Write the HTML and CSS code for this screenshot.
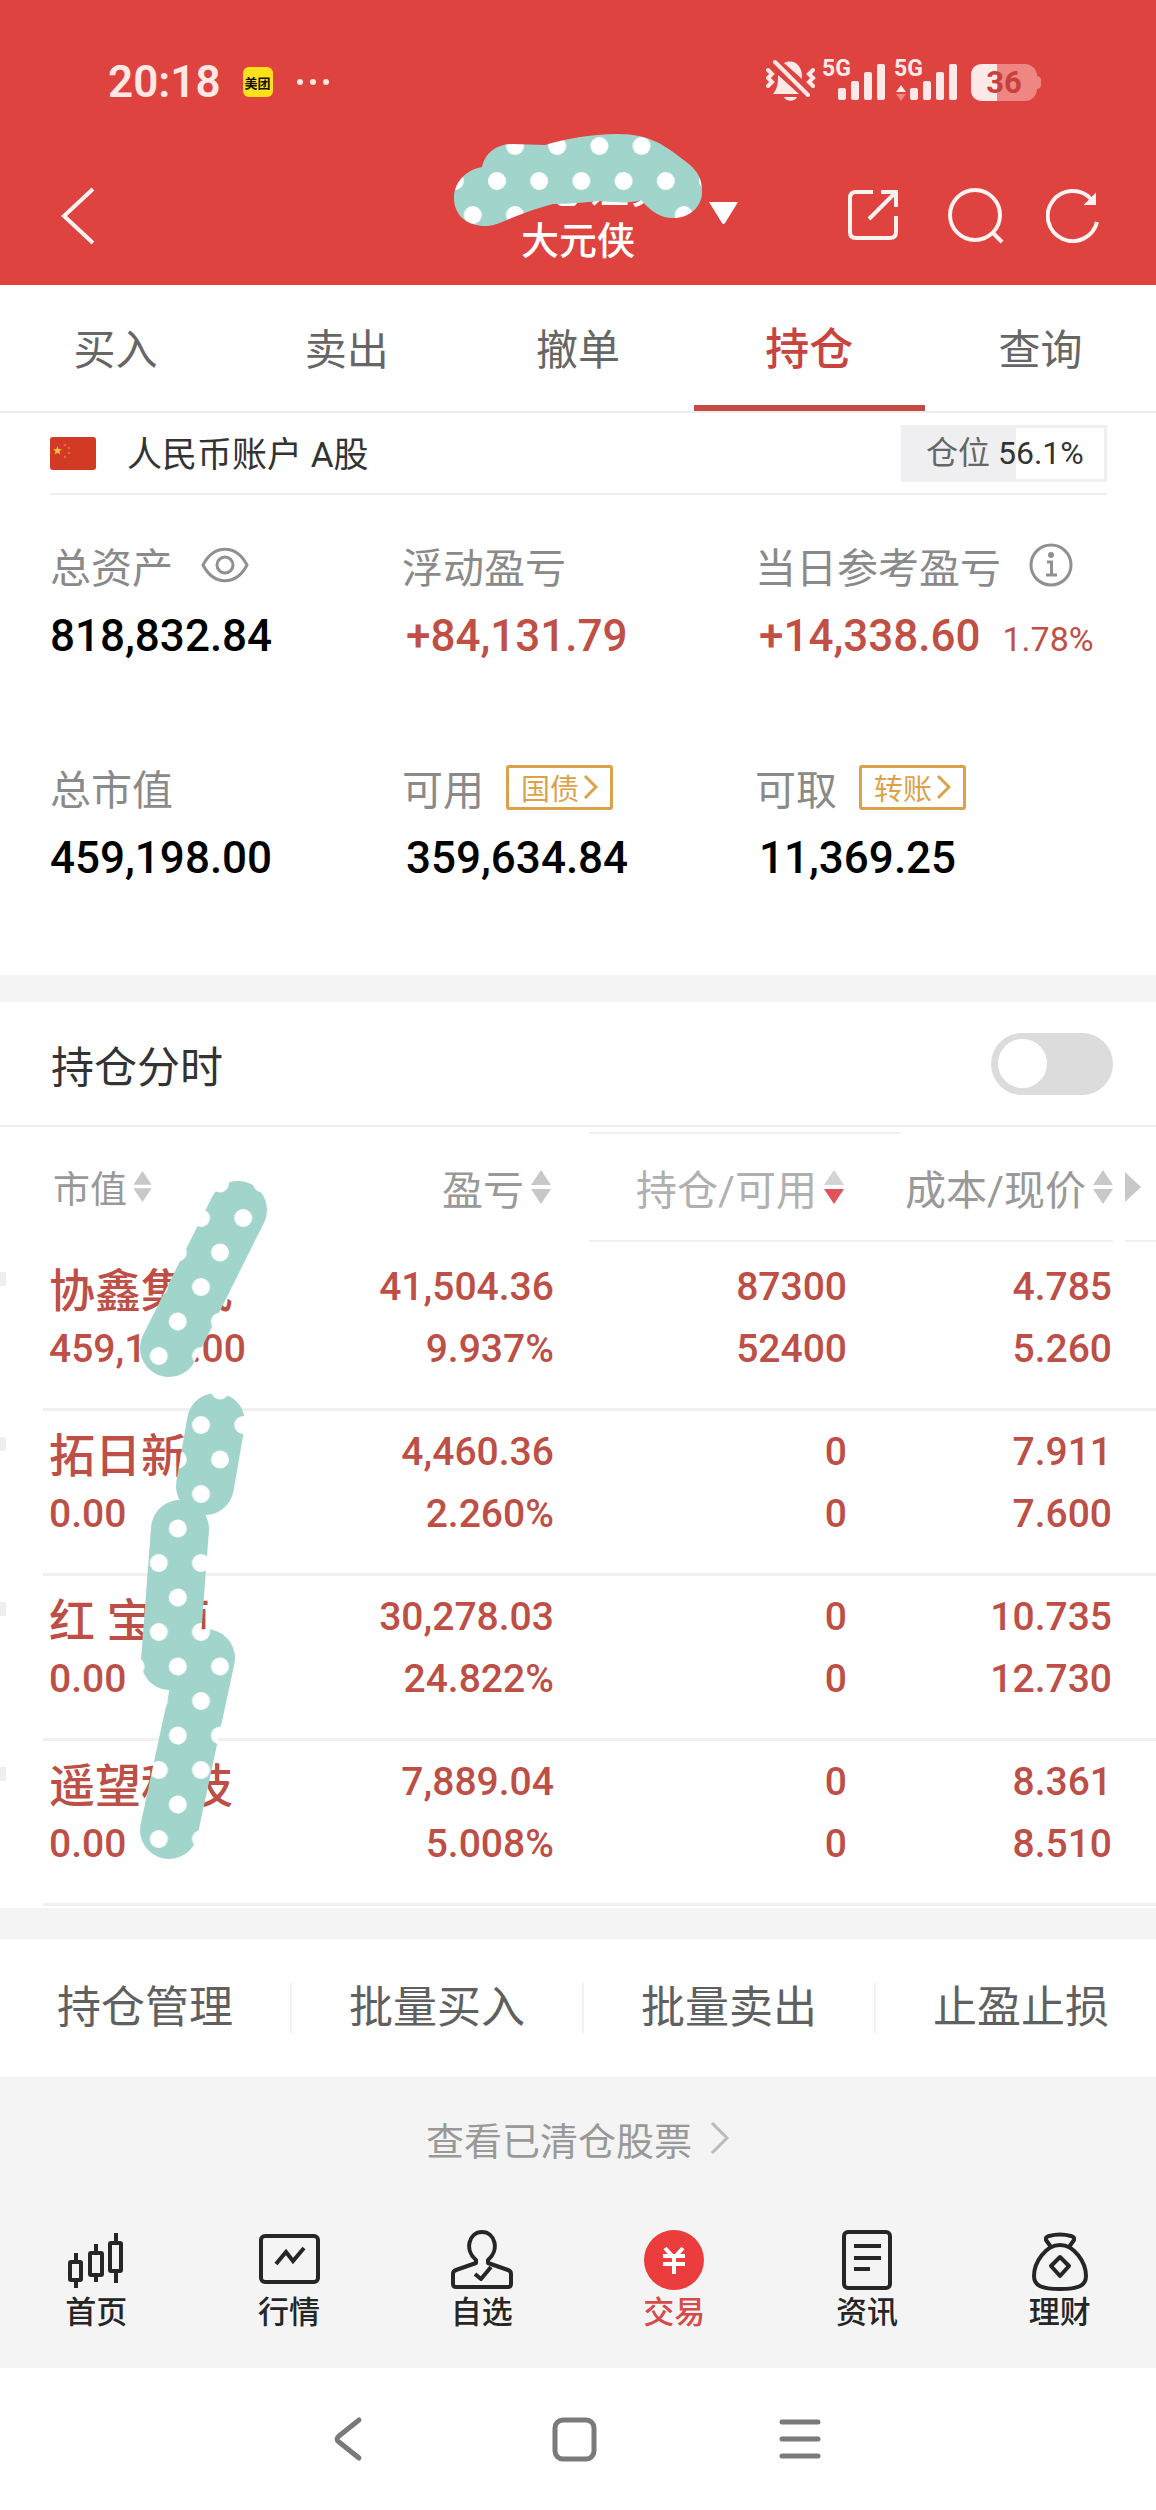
FILE: index.html
```html
<!DOCTYPE html>
<html lang="zh-CN">
<head>
<meta charset="utf-8">
<meta name="viewport" content="width=device-width, initial-scale=1">
<title>持仓</title>
<link rel="stylesheet" href="styles.css">
</head>
<body>
<div class="page">
  <header class="header">
    <div class="status">
      <span class="clock">20:18</span>
      <span class="app-badge">美团</span>
      <svg class="more" width="34" height="8" viewBox="0 0 34 8" fill="#fde8e6"><circle cx="4" cy="4" r="3"/><circle cx="17" cy="4" r="3"/><circle cx="30" cy="4" r="3"/></svg>
      <svg class="status-icons" width="276" height="68" viewBox="766 47 276 68" fill="#ffe9e8">
        <path d="M784 62c11-5 19 4 18 16z"/>
        <path d="M778 74l21 19h-26c5-6 5-12 5-19z"/>
        <path d="M784 96h13c-2 5-11 5-13 0z"/>
        <path d="M775 61l33 33M768 69l4 4-4 4 4 4-4 4M813 69l-4 4 4 4-4 4 4 4" fill="none" stroke="#ffe9e8" stroke-width="4" stroke-linecap="round"/>
        <text x="822" y="75" class="net">5G</text>
        <rect x="838" y="87" width="8" height="12" rx="2"/><rect x="851" y="80" width="8" height="19" rx="2"/><rect x="864" y="71" width="8" height="28" rx="2"/><rect x="877" y="63" width="8" height="36" rx="2"/>
        <text x="894" y="75" class="net">5G</text>
        <path d="M896 91l5-7 5 7z"/><path d="M896 93l5 7 5-7z" fill="#ee8683"/>
        <rect x="910" y="87" width="8" height="12" rx="2"/><rect x="923" y="80" width="8" height="19" rx="2"/><rect x="936" y="71" width="8" height="28" rx="2"/><rect x="949" y="63" width="8" height="36" rx="2"/>
        <rect x="971" y="63" width="66" height="37" rx="12" fill="#ee8683"/><path d="M1036 75q5 0 5 4v5q0 4-5 4z" fill="#ee8683"/>
        <path d="M997 63h-14q-12 0-12 12v13q0 12 12 12h14z"/>
        <text x="1004" y="92" class="battery" text-anchor="middle">36</text>
      </svg>
    </div>
    <div class="nav">
      <button class="icon-btn back" aria-label="返回"><svg width="36" height="60" viewBox="0 0 36 60" fill="none" stroke="#fff3f2" stroke-width="4"><path d="M33 3L4 30l29 27"/></svg></button>
      <div class="titles">
        <h1 class="broker">国心证券</h1>
        <p class="account-name">大元侠</p>
      </div>
      <div class="tools">
        <button class="icon-btn" aria-label="切换账户"><svg width="31" height="28" viewBox="0 0 31 28" fill="#fff"><path d="M1 1h29L17 22q-2 2-3 0z"/></svg></button>
        <button class="icon-btn share" aria-label="分享"><svg width="52" height="52" viewBox="0 0 52 52" fill="none" stroke="#fff3f2" stroke-width="4"><path d="M26 3H9q-6 0-6 6v34q0 6 6 6h34q6 0 6-6V27"/><path d="M34 3h15v15M48 4L22 30"/></svg></button>
        <button class="icon-btn search" aria-label="搜索"><svg width="58" height="58" viewBox="0 0 58 58" fill="none" stroke="#fff3f2" stroke-width="4"><circle cx="29" cy="29" r="25"/><path d="M46 46l10 10"/></svg></button>
        <button class="icon-btn" aria-label="刷新"><svg width="54" height="56" viewBox="0 0 54 56" fill="none" stroke="#fff3f2" stroke-width="4"><path d="M51 35A25 25 0 1 1 45 12"/><path d="M49 8v9h-9z" fill="#fff3f2" stroke-width="2"/></svg></button>
      </div>
    </div>
    <svg class="mask-title" width="252" height="96" viewBox="452 132 252 96" aria-hidden="true">
      <defs><pattern id="dots-a" patternUnits="userSpaceOnUse" x="494" y="129" width="42.2" height="69"><rect width="42.2" height="69" fill="#a1d5cc"/><g fill="#fff"><circle cx="21" cy="17" r="9"/><circle cx="3" cy="52" r="9"/><circle cx="45.2" cy="52" r="9"/></g></pattern></defs>
      <path fill="url(#dots-a)" d="M482 167C485 152 498 144 512 144L545 145C565 139 590 134 618 134C650 134 665 145 690 165C699 173 702 180 702 192C702 208 688 218 674 218C660 218 652 212 641 200C630 204 615 202 600 201C585 202 570 204 553 204C530 210 512 218 497 224C480 230 454 223 454 198C454 182 466 170 482 167Z"/>
    </svg>
  </header>

  <nav class="tabs">
    <a href="#" class="tab">买入</a><a href="#" class="tab">卖出</a><a href="#" class="tab">撤单</a><a href="#" class="tab active">持仓</a><a href="#" class="tab">查询</a>
  </nav>

  <main>
    <section class="account">
      <svg width="46" height="33" viewBox="0 0 46 33"><rect width="46" height="33" rx="3" fill="#d23a26"/><path d="M7.500 9l1.200 3.200 3.300.1-2.600 2 .9 3.300-2.800-1.900-2.800 1.900.9-3.300-2.600-2 3.300-.1z" fill="#f9c63a"/><g fill="#e0702f"><circle cx="15" cy="8" r="1.300"/><circle cx="19" cy="11" r="1.300"/><circle cx="19" cy="16" r="1.300"/><circle cx="15" cy="20" r="1.300"/></g></svg>
      <span class="account-type">人民币账户 A股</span>
      <span class="position"><span class="position-fill" style="width:56.1%"></span><span class="position-text">仓位 <b>56.1%</b></span></span>
    </section>

    <dl class="stats">
      <div class="stat">
        <dt>总资产 <button class="icon-btn eye" aria-label="隐藏金额"><svg width="48" height="36" viewBox="0 0 48 36" fill="none" stroke="#909090" stroke-width="3"><path d="M2 18C13-3 35-3 46 18C35 39 13 39 2 18Z"/><circle cx="24" cy="18" r="8"/></svg></button></dt>
        <dd>818,832.84</dd>
      </div>
      <div class="stat"><dt>浮动盈亏</dt><dd class="up">+84,131.79</dd></div>
      <div class="stat">
        <dt>当日参考盈亏 <button class="icon-btn info" aria-label="说明"><svg width="44" height="44" viewBox="0 0 44 44" fill="none" stroke="#909090" stroke-width="3"><circle cx="22" cy="22" r="20"/><path d="M18 19h4.500v13M17 32h11"/><circle cx="22" cy="12" r="1.500" fill="#909090"/></svg></button></dt>
        <dd class="up">+14,338.60 <small>1.78%</small></dd>
      </div>
      <div class="stat"><dt>总市值</dt><dd>459,198.00</dd></div>
      <div class="stat"><dt>可用 <button class="chip">国债<svg width="15" height="26" viewBox="0 0 15 26" fill="none" stroke="#dba24a" stroke-width="3"><path d="M2 2l11 11L2 24"/></svg></button></dt><dd>359,634.84</dd></div>
      <div class="stat"><dt>可取 <button class="chip">转账<svg width="15" height="26" viewBox="0 0 15 26" fill="none" stroke="#dba24a" stroke-width="3"><path d="M2 2l11 11L2 24"/></svg></button></dt><dd>11,369.25</dd></div>
    </dl>

    <section class="intraday">
      <label for="intraday">持仓分时</label>
      <input type="checkbox" role="switch" id="intraday" class="switch">
    </section>

    <section class="holdings">
      <table>
        <colgroup><col class="c-edge"><col><col class="c-pnl"><col class="c-qty"><col class="c-price"><col class="c-edge"></colgroup>
        <thead>
          <tr>
            <th></th>
            <th class="name"><button class="sort small">市值<svg width="19" height="31" viewBox="0 0 20 34" fill="#c8c8c8"><path d="M10 0l10 15H0zM0 19h20L10 34z"/></svg></button></th>
            <th class="pnl"><button class="sort">盈亏<svg width="20" height="34" viewBox="0 0 20 34" fill="#c8c8c8"><path d="M10 0l10 15H0zM0 19h20L10 34z"/></svg></button></th>
            <th class="qty"><button class="sort">持仓/可用<svg width="20" height="34" viewBox="0 0 20 34" fill="#d4d4d4"><path d="M10 0l10 15H0z"/><path d="M0 19h20L10 34z" fill="#e2525c"/></svg></button></th>
            <th class="price"><button class="sort">成本/现价<svg width="20" height="34" viewBox="0 0 20 34" fill="#c8c8c8"><path d="M10 0l10 15H0zM0 19h20L10 34z"/></svg></button></th>
            <th class="next"><button class="sort" aria-label="更多列"><svg width="16" height="30" viewBox="0 0 16 30" fill="#c8c8c8"><path d="M0 0l16 15L0 30z"/></svg></button></th>
          </tr>
        </thead>
        <tbody>
          <tr><td><i class="mark"></i></td><td class="name"><b>协鑫集成</b>459,198.00</td><td class="pnl">41,504.36<br>9.937%</td><td class="qty">87300<br>52400</td><td class="price">4.785<br>5.260</td><td></td></tr>
          <tr><td><i class="mark"></i></td><td class="name"><b>拓日新能</b>0.00</td><td class="pnl">4,460.36<br>2.260%</td><td class="qty">0<br>0</td><td class="price">7.911<br>7.600</td><td></td></tr>
          <tr><td><i class="mark"></i></td><td class="name"><b>红 宝 丽</b>0.00</td><td class="pnl">30,278.03<br>24.822%</td><td class="qty">0<br>0</td><td class="price">10.735<br>12.730</td><td></td></tr>
          <tr><td><i class="mark"></i></td><td class="name"><b>遥望科技</b>0.00</td><td class="pnl">7,889.04<br>5.008%</td><td class="qty">0<br>0</td><td class="price">8.361<br>8.510</td><td></td></tr>
        </tbody>
      </table>
      <svg class="mask-names" width="130" height="700" viewBox="139 1180 130 700" aria-hidden="true">
        <defs><pattern id="dots-b" patternUnits="userSpaceOnUse" x="180" y="1201" width="42.200" height="69"><rect width="42.200" height="69" fill="#a1d5cc"/><g fill="#fff"><circle cx="21" cy="17" r="9"/><circle cx="-2.200" cy="51.500" r="9"/><circle cx="40" cy="51.500" r="9"/></g></pattern></defs>
        <g fill="none" stroke="url(#dots-b)" stroke-width="58" stroke-linecap="round"><path d="M238 1210L169 1348"/><path d="M216 1422L205 1486"/><path d="M180 1529L170 1661"/><path d="M206 1658L169 1830"/></g>
      </svg>
    </section>

    <nav class="actions"><a href="#">持仓管理</a><a href="#">批量买入</a><a href="#">批量卖出</a><a href="#">止盈止损</a></nav>

    <a href="#" class="cleared">查看已清仓股票<svg width="20" height="34" viewBox="0 0 20 34" fill="none" stroke="#bbb" stroke-width="3"><path d="M2 2l15 15L2 32"/></svg></a>
  </main>

  <footer>
    <nav class="tabbar">
      <a href="#"><svg width="64" height="64" viewBox="0 0 64 64" fill="none" stroke="#262626" stroke-width="4"><rect x="6" y="34" width="11" height="18" rx="1"/><path d="M12 25v9M12 52v8"/><rect x="26" y="25" width="12" height="22" rx="1"/><path d="M32 16v9M32 47v7"/><rect x="46" y="15" width="11" height="28" rx="1"/><path d="M52 5v10M52 43v12"/></svg>首页</a>
      <a href="#"><svg width="64" height="64" viewBox="0 0 64 64" fill="none" stroke="#262626" stroke-width="4"><rect x="4" y="8" width="57" height="46" rx="4"/><path d="M19 36l10-12 7 9 11-13"/></svg>行情</a>
      <a href="#"><svg width="64" height="64" viewBox="0 0 64 64" fill="none" stroke="#262626" stroke-width="4" stroke-linejoin="round"><path d="M26 34V32C14 22 19 4 32 4S50 22 38 32V35L58 42Q61 43 61 46V56Q61 59 58 59H6Q3 59 3 56V46Q3 43 6 42L26 35Z"/><path d="M28 34h8" stroke="#f4f4f4" stroke-width="7"/><path d="M25 46l6 5 10-12"/></svg>自选</a>
      <a href="#" class="active"><svg width="64" height="64" viewBox="0 0 64 64"><circle cx="32" cy="32" r="30" fill="#eb3d3d"/><path d="M23 20l9 10 9-10M21 28h22M21 36h22M32 29v17" fill="none" stroke="#fff" stroke-width="4"/></svg>交易</a>
      <a href="#"><svg width="64" height="64" viewBox="0 0 64 64" fill="none" stroke="#262626" stroke-width="4"><rect x="9" y="4" width="46" height="56" rx="4"/><path d="M19 18h27M19 30h27M19 41h16"/></svg>资讯</a>
      <a href="#"><svg width="64" height="64" viewBox="0 0 64 64" fill="none" stroke="#262626" stroke-width="4" stroke-linejoin="round"><path d="M23 19l-5-7q-1-3 3-4q11-3 22 0q4 1 3 4l-5 7"/><path d="M32 17C18 17 6 34 6 48C6 58 14 61 32 61S58 58 58 48C58 34 46 17 32 17Z"/><path d="M32 29l9 9-9 10-9-10z"/></svg>理财</a>
    </nav>
    <div class="sysnav">
      <button class="icon-btn" aria-label="返回"><svg width="46" height="46" viewBox="0 0 46 46" fill="none" stroke="#7a7a7a" stroke-width="5" stroke-linecap="round"><path d="M34 4L14 20q-4 3 0 6l20 16"/></svg></button>
      <button class="icon-btn" aria-label="主页"><svg width="46" height="46" viewBox="0 0 46 46" fill="none" stroke="#7a7a7a" stroke-width="5"><rect x="4" y="4" width="39" height="39" rx="8"/></svg></button>
      <button class="icon-btn" aria-label="菜单"><svg width="46" height="46" viewBox="0 0 46 46" fill="none" stroke="#7a7a7a" stroke-width="5" stroke-linecap="round"><path d="M5 6h36M5 23h36M5 40h36"/></svg></button>
    </div>
  </footer>
</div>
</body>
</html>
```
FILE: styles.css
```css
* { box-sizing: border-box; }

body {
  margin: 0;
  background: #fff;
  color: #333;
  font-family: Roboto, "Noto Sans CJK SC", sans-serif;
}

h1, p, dl, dd { margin: 0; }
a { color: inherit; text-decoration: none; }
svg { display: block; flex: none; }
button { font-family: inherit; padding: 0; border: 0; background: none; color: inherit; cursor: pointer; }
.icon-btn { display: flex; }
.page { overflow: hidden; }

/* red header */
.header { position: relative; background: #de433f; color: #fff; padding-bottom: 17px; }
.status { display: flex; align-items: center; height: 164px; padding: 0 114px 0 108px; }
.clock { font-size: 44px; font-weight: 600; color: #fde8e6; }
.app-badge {
  display: flex; align-items: center; justify-content: center;
  width: 30px; height: 30px; margin: 0 23px 0 22px; border-radius: 6px;
  background: #ffe11a; color: #111; font-size: 13px; font-weight: 700;
}
.status-icons { margin-left: auto; }
.net { font-size: 23px; font-weight: 700; }
.battery { font-size: 31px; font-weight: 700; fill: #c8403c; }

.nav { display: grid; grid-template-columns: 1fr auto 1fr; align-items: center; }
.back { margin-left: 60px; justify-self: start; }
.titles { text-align: center; }
.broker { padding-left: 18px; font-size: 42px; font-weight: 500; line-height: 50px; }
.account-name { font-size: 38px; font-weight: 500; line-height: 54px; }
.tools { display: flex; align-items: center; padding: 0 56px 2px 37px; }
.share { margin-left: auto; }
.search { margin: 0 42px 0 47px; }
.mask-title { position: absolute; top: 132px; left: calc(50% - 126px); }

/* trade tabs */
.tabs { display: grid; grid-template-columns: repeat(5, 1fr); border-bottom: 2px solid #ececec; }
.tab { height: 126px; border-bottom: 6px solid transparent; text-align: center; font-size: 42px; line-height: 131px; color: #666; }
.tab.active { border-color: #c34a45; color: #c9443f; font-size: 44px; font-weight: 500; }

/* account line */
.account { display: flex; align-items: center; height: 82px; margin: 0 49px 0 50px; border-bottom: 2px solid #efefef; }
.account-type { margin-left: 31px; padding-bottom: 4px; font-size: 35px; }
.position { position: relative; display: flex; align-items: center; width: 206px; height: 57px; margin-left: auto; border: 3px solid #efeff1; }
.position-fill { height: 100%; background: #efeff1; }
.position-text { position: absolute; left: 22px; padding-bottom: 6px; font-size: 32px; color: #666; }
.position-text b { font-weight: 400; color: #333; }

/* asset figures */
.stats { display: grid; grid-template-columns: 352fr 353fr 401fr; row-gap: 88px; padding: 40px 0 87px 50px; }
dt { display: flex; align-items: center; height: 60px; margin-bottom: 11px; font-size: 41px; color: #8a8a8a; }
dd { font-size: 44px; font-weight: 500; line-height: 60px; color: #000; white-space: nowrap; }
.stat:not(:nth-child(3n+1)) dd { padding-left: 4px; }
dd.up { color: #c04f46; }
dd small { margin-left: 11px; font-size: 34px; font-weight: 400; }
.eye { margin-left: 28px; }
.info { margin-left: 28px; }
.chip { display: flex; align-items: center; gap: 4px; height: 45px; margin-left: 22px; padding: 0 12px; border: 3px solid #dba24a; border-radius: 3px; font-size: 29px; color: #dba24a; }

/* intraday switch */
.intraday {
  display: flex; align-items: center; justify-content: space-between;
  height: 152px; padding: 0 43px 0 51px;
  border-top: 27px solid #f4f4f4; border-bottom: 2px solid #ececec; font-size: 43px;
}
.switch { appearance: none; display: flex; align-items: center; width: 122px; height: 62px; margin: 0; padding: 0 7px; border-radius: 31px; background: #dcdcdc; }
.switch::before { content: ""; width: 49px; height: 49px; border-radius: 50%; background: #fff; }
.switch:checked { justify-content: flex-end; }

/* holdings */
.holdings { position: relative; padding-bottom: 2px; }
table { width: 100%; table-layout: fixed; border-collapse: separate; border-spacing: 0; }
.c-edge { width: 43px; }
.c-pnl { width: 25%; }
.c-qty { width: 27%; }
.c-price { width: 212px; }
th { height: 119px; padding: 4px 0; font-weight: 400; }
.sort { display: flex; align-items: center; justify-content: flex-end; gap: 7px; width: 100%; height: 110px; border: 2px solid transparent; border-width: 2px 0; font-size: 41px; color: #999; white-space: nowrap; }
.sort.small { justify-content: flex-start; gap: 6px; font-size: 37px; }
.qty .sort { padding-right: 57px; border-color: #f0f0f0; color: #b0b0b0; }
.price .sort { border-bottom-color: #f0f0f0; }
.next { padding-left: 12px; }
.next .sort { justify-content: flex-start; border-bottom-color: #f0f0f0; }
td { height: 165px; padding: 10px 0 28px; border-bottom: 3px solid #f0f0f0; vertical-align: top; text-align: right; font-size: 39px; font-weight: 500; line-height: 62px; color: #bd4f46; white-space: nowrap; }
td:first-child { border-color: transparent; }
.name { padding-left: 6px; text-align: left; }
th.name { padding-left: 10px; }
.name b { display: block; padding-top: 4px; margin-bottom: -4px; font-size: 46px; font-weight: 500; }
td.pnl { padding-right: 35px; }
th.pnl { padding-right: 38px; }
td.qty { padding-right: 54px; }
td.price { padding-right: 1px; }
.mark { display: block; width: 6px; height: 14px; margin-top: 16px; background: #efeff1; }
.mask-names { position: absolute; top: 53px; left: 139px; }

/* batch actions */
.actions { display: grid; grid-template-columns: repeat(4, 1fr); margin-right: -12px; padding: 44px 0; border-top: 31px solid #f4f4f4; }
.actions a { height: 50px; border-right: 2px solid #f1f1f1; text-align: center; font-size: 44px; line-height: 50px; color: #606060; }

.cleared { display: flex; align-items: center; justify-content: center; gap: 18px; height: 126px; padding-bottom: 4px; background: #f4f4f4; font-size: 38px; color: #999; }

.tabbar { display: grid; grid-template-columns: repeat(6, 1fr); height: 165px; padding-top: 25px; background: #f4f4f4; }
.tabbar a { display: flex; flex-direction: column; align-items: center; font-size: 31px; line-height: 42px; font-weight: 500; color: #262626; }
.tabbar .active { color: #d64a4a; }
.sysnav { display: flex; align-items: center; justify-content: center; gap: 180px; height: 142px; padding-right: 8px; }
```
